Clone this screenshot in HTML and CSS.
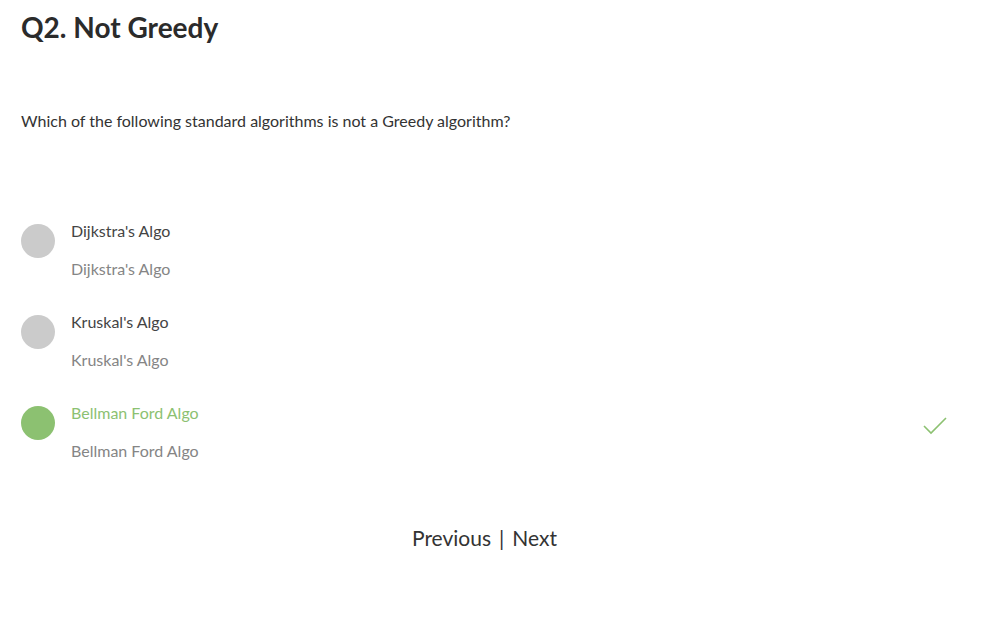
FILE: index.html
```html
<!DOCTYPE html>
<html>
<head>
<meta charset="utf-8">
<link rel="stylesheet" href="styles.css">
</head>
<body>
<div class="page">
  <h1 class="title">Q2. Not Greedy</h1>
  <p class="question">Which of the following standard algorithms is not a Greedy algorithm?</p>
  <div class="options">
    <div class="option">
      <span class="dot"></span>
      <div class="texts">
        <div class="label">Dijkstra's Algo</div>
        <div class="sub">Dijkstra's Algo</div>
      </div>
    </div>
    <div class="option">
      <span class="dot"></span>
      <div class="texts">
        <div class="label">Kruskal's Algo</div>
        <div class="sub">Kruskal's Algo</div>
      </div>
    </div>
    <div class="option correct">
      <span class="dot"></span>
      <div class="texts">
        <div class="label">Bellman Ford Algo</div>
        <div class="sub">Bellman Ford Algo</div>
      </div>
      <svg class="check" width="26" height="20" viewBox="0 0 26 20"><path d="M2 10 L9 17 L24 2" fill="none" stroke="#8cc171" stroke-width="1.6"/></svg>
    </div>
  </div>
  <div class="nav"><span>Previous</span><span class="sep">|</span><span>Next</span></div>
</div>
</body>
</html>
```
FILE: styles.css
```css
html, body { margin: 0; padding: 0; background: #fff; }
body { font-family: Lato, "Open Sans", sans-serif; color: #333; }
.page { padding: 0 35px 0 21px; }
.title { margin: 0; padding-top: 10px; font-size: 28px; font-weight: 700; color: #2b2b2b; line-height: 34px; letter-spacing: 0; }
.question { margin: 0; margin-top: 67px; font-size: 16px; line-height: 20px; color: #333; }
.options { margin-top: 90px; display: flex; flex-direction: column; gap: 33px; }
.option { display: flex; align-items: flex-start; position: relative; }
.dot { width: 34px; height: 34px; border-radius: 50%; background: #cbcbcb; margin-top: 3px; flex-shrink: 0; }
.texts { margin-left: 16px; }
.label { font-size: 16px; line-height: 20px; color: #444; }
.sub { font-size: 16px; line-height: 20px; color: #858585; margin-top: 18px; }
.correct .dot { background: #8cc171; }
.correct .label { color: #8cc171; }
.check { position: absolute; right: 0; top: 13px; }
.nav { margin-top: 64px; text-align: center; font-size: 21px; color: #333; }
.sep { margin: 0 8px; }
```
